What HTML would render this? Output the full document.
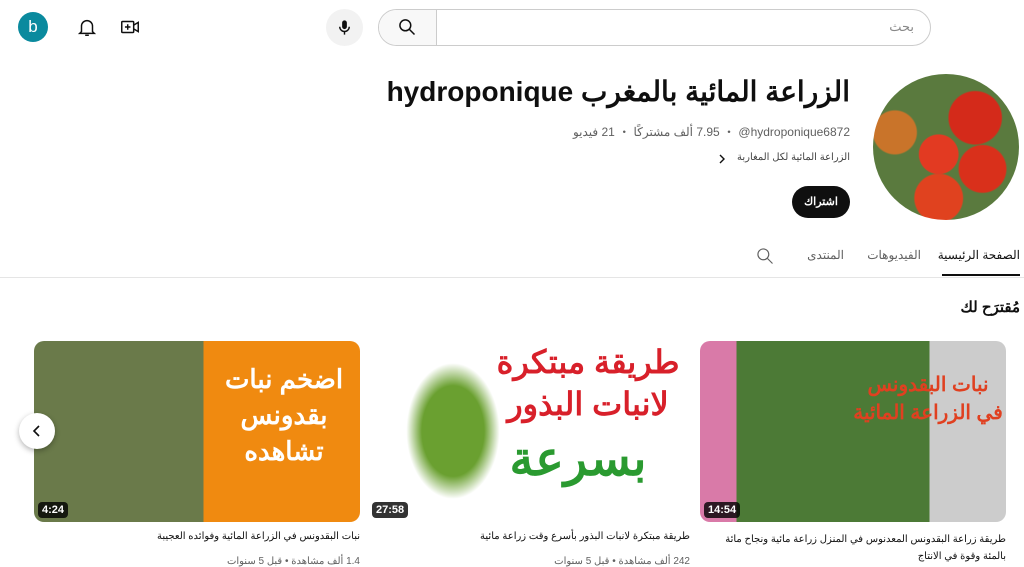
<!DOCTYPE html>
<html><head><meta charset="utf-8"><style>
body{margin:0;width:1024px;height:567px;overflow:hidden;background:#fff;font-family:"Liberation Sans","Noto Sans CJK SC",sans-serif;position:relative;color:#0f0f0f}
.a{position:absolute}
.r{direction:rtl;text-align:right}
.thumb{position:absolute;top:341px;height:181px;border-radius:10px;overflow:hidden}
.dur{position:absolute;bottom:4px;left:4px;background:rgba(0,0,0,.8);color:#fff;font-size:11px;font-weight:bold;padding:2px 4px;border-radius:4px}
.t{font-size:10px;color:#0f0f0f}
.m{font-size:10px;color:#606060}
.ib{display:inline-block;direction:ltr}
</style></head><body>
<div class="a" style="left:18px;top:12px;width:30px;height:30px;border-radius:50%;background:#0a8a9e;color:#fff;font-size:17px;text-align:center;line-height:30px">b</div>
<svg class="a" style="left:76px;top:16px" width="22" height="22" viewBox="0 0 24 24" fill="none" stroke="#0f0f0f" stroke-width="1.6"><path d="M6 17V11a6 6 0 0 1 12 0v6l2 2H4z"/><path d="M10 21h4"/></svg>
<svg class="a" style="left:119px;top:16px" width="22" height="22" viewBox="0 0 24 24" fill="none" stroke="#0f0f0f" stroke-width="1.6"><rect x="3" y="6" width="13" height="12" rx="1"/><path d="M16 10l5-3v10l-5-3M9.5 9v6M6.5 12h6"/></svg>
<div class="a" style="left:326px;top:9px;width:37px;height:37px;border-radius:50%;background:#f2f2f2"></div>
<svg class="a" style="left:335px;top:18px" width="19" height="19" viewBox="0 0 24 24" fill="#0f0f0f"><rect x="9" y="3" width="6" height="11" rx="3"/><path d="M6 11a6 6 0 0 0 12 0" fill="none" stroke="#0f0f0f" stroke-width="1.8"/><path d="M12 17v4" stroke="#0f0f0f" stroke-width="1.8"/></svg>
<div class="a" style="left:378px;top:9px;width:551px;height:35px;border:1px solid #ccc;border-radius:20px"></div>
<div class="a" style="left:379px;top:10px;width:57px;height:35px;background:#f8f8f8;border-right:1px solid #ccc;border-radius:20px 0 0 20px"></div>
<svg class="a" style="left:397px;top:17px" width="20" height="20" viewBox="0 0 24 24" fill="none" stroke="#0f0f0f" stroke-width="1.8"><circle cx="10" cy="10" r="6.5"/><path d="M15 15l6 6"/></svg>
<div class="a r" style="right:110px;top:19px;font-size:13px;color:#888">بحث</div>

<div class="a" style="left:873px;top:74px;width:146px;height:146px;border-radius:50%;background:radial-gradient(circle at 70% 30%,#d42a1a 0 18%,transparent 19%),radial-gradient(circle at 45% 55%,#e23a22 0 17%,transparent 18%),radial-gradient(circle at 75% 65%,#d9301b 0 16%,transparent 17%),radial-gradient(circle at 45% 85%,#e0421f 0 16%,transparent 17%),radial-gradient(circle at 15% 40%,#c9742a 0 14%,transparent 15%),#5a7a3e"></div>
<div class="a r" style="right:174px;top:75px;font-size:28px;font-weight:bold;white-space:nowrap">الزراعة المائية بالمغرب hydroponique</div>
<div class="a r" style="right:174px;top:123px;font-size:12px;color:#606060;white-space:nowrap"><span class="ib">@hydroponique6872</span> ‧ <span class="ib">7.95</span> ألف مشتركًا ‧ <span class="ib">21</span> فيديو</div>
<div class="a r" style="right:174px;top:152px;font-size:10px;color:#444;white-space:nowrap">الزراعة المائية لكل المغاربة</div>
<svg class="a" style="left:716px;top:153px" width="12" height="12" viewBox="0 0 12 12" fill="none" stroke="#0f0f0f" stroke-width="1.4"><path d="M4 2l4 4-4 4"/></svg>
<div class="a" style="left:792px;top:186px;width:58px;height:32px;border-radius:16px;background:#0f0f0f;color:#fff;font-size:11px;font-weight:bold;text-align:center;line-height:32px">اشتراك</div>

<div class="a r" style="right:4px;top:248px;font-size:12px;color:#0f0f0f">الصفحة الرئيسية</div>
<div class="a" style="left:942px;top:274px;width:78px;height:2px;background:#0f0f0f"></div>
<div class="a r" style="right:103px;top:248px;font-size:12px;color:#606060">الفيديوهات</div>
<div class="a r" style="right:180px;top:248px;font-size:12px;color:#606060">المنتدى</div>
<svg class="a" style="left:755px;top:246px" width="20" height="20" viewBox="0 0 24 24" fill="none" stroke="#606060" stroke-width="1.4"><circle cx="10" cy="10" r="6.5"/><path d="M15 15l6 6"/></svg>
<div class="a" style="left:0;top:277px;width:1024px;height:1px;background:#e5e5e5"></div>
<div class="a r" style="right:4px;top:298px;font-size:15px;font-weight:bold">مُقترَح لك</div>

<div class="thumb" style="left:34px;width:326px;background:linear-gradient(90deg,#6a7a4a 0 52%,#f08a10 52%)"><div class="dur">4:24</div>
<div class="a" style="left:175px;top:20px;width:150px;text-align:center;color:#fff;font-size:26px;font-weight:bold;line-height:36px">اضخم نبات<br>بقدونس<br>تشاهده</div></div>
<div class="thumb" style="left:368px;width:322px;background:#fff"><div class="dur">27:58</div>
<div class="a" style="left:30px;top:10px;width:110px;height:160px;background:radial-gradient(ellipse at 50% 50%,#6aa030 0 40%,transparent 60%)"></div>
<div class="a" style="left:120px;top:0;width:200px;text-align:center;color:#d8202a;font-size:32px;font-weight:bold;line-height:42px">طريقة مبتكرة<br>لانبات البذور</div>
<div class="a" style="left:110px;top:90px;width:200px;text-align:center;color:#2a9a30;font-size:48px;font-weight:bold">بسرعة</div></div>
<div class="thumb" style="left:700px;width:306px;background:linear-gradient(90deg,#d97aa8 0 12%,#4c7a36 12% 75%,#ccc 75%)"><div class="dur">14:54</div>
<div class="a" style="left:150px;top:30px;width:156px;text-align:center;color:#e04020;font-size:20px;font-weight:bold;line-height:28px">نبات البقدونس<br>في الزراعة المائية</div></div>
<div class="a" style="left:19px;top:413px;width:36px;height:36px;border-radius:50%;background:#fff;box-shadow:0 2px 6px rgba(0,0,0,.3)"></div>
<svg class="a" style="left:30px;top:424px" width="14" height="14" viewBox="0 0 14 14" fill="none" stroke="#0f0f0f" stroke-width="1.6"><path d="M9 2L4 7l5 5"/></svg>

<div class="a r t" style="right:664px;top:531px;white-space:nowrap">نبات البقدونس في الزراعة المائية وفوائده العجيبة</div>
<div class="a r m" style="right:664px;top:556px;white-space:nowrap"><span class="ib">1.4</span> ألف مشاهدة • قبل 5 سنوات</div>
<div class="a r t" style="right:334px;top:531px;white-space:nowrap">طريقة مبتكرة لانبات البذور بأسرع وقت زراعة مائية</div>
<div class="a r m" style="right:334px;top:556px;white-space:nowrap">242 ألف مشاهدة • قبل 5 سنوات</div>
<div class="a r t" style="right:18px;top:531px;width:290px;line-height:17px">طريقة زراعة البقدونس المعدنوس في المنزل زراعة مائية ونجاح مائة بالمئة وقوة في الانتاج</div>
</body></html>
